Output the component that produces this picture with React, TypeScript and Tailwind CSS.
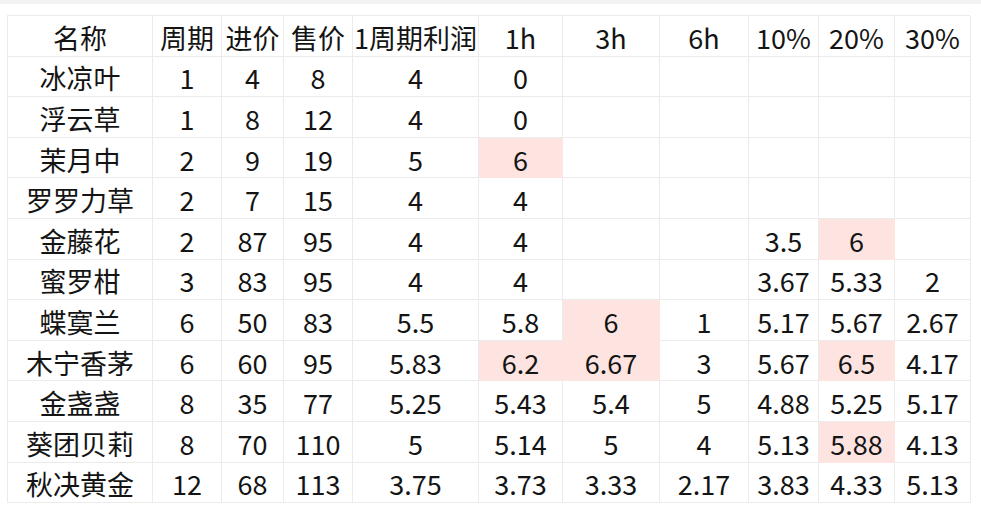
const headers = ["名称", "周期", "进价", "售价", "1周期利润", "1h", "3h", "6h", "10%", "20%", "30%"]

// "*" prefix marks a highlighted cell
const rows: string[][] = [
  ["冰凉叶", "1", "4", "8", "4", "0", "", "", "", "", ""],
  ["浮云草", "1", "8", "12", "4", "0", "", "", "", "", ""],
  ["茉月中", "2", "9", "19", "5", "*6", "", "", "", "", ""],
  ["罗罗力草", "2", "7", "15", "4", "4", "", "", "", "", ""],
  ["金藤花", "2", "87", "95", "4", "4", "", "", "3.5", "*6", ""],
  ["蜜罗柑", "3", "83", "95", "4", "4", "", "", "3.67", "5.33", "2"],
  ["蝶寞兰", "6", "50", "83", "5.5", "5.8", "*6", "1", "5.17", "5.67", "2.67"],
  ["木宁香茅", "6", "60", "95", "5.83", "*6.2", "*6.67", "3", "5.67", "*6.5", "4.17"],
  ["金盏盏", "8", "35", "77", "5.25", "5.43", "5.4", "5", "4.88", "5.25", "5.17"],
  ["葵团贝莉", "8", "70", "110", "5", "5.14", "5", "4", "5.13", "*5.88", "4.13"],
  ["秋决黄金", "12", "68", "113", "3.75", "3.73", "3.33", "2.17", "3.83", "4.33", "5.13"],
]

function Cell({ value }: { value: string }) {
  const hot = value.startsWith("*")
  const text = hot ? value.slice(1) : value
  return (
    <div
      className={
        "flex h-[40.6px] items-center justify-center whitespace-nowrap border-b border-r pt-[3px] " +
        (hot ? "border-[#fde4e1] bg-[#fde4e1]" : "border-[#ebebeb] bg-white")
      }
    >
      {text}
    </div>
  )
}

export default function App() {
  return (
    <div className="h-[508px] w-[981px] overflow-hidden bg-white font-['Noto_Sans_CJK_SC',sans-serif] text-[27px] leading-none text-[#141414]">
      <div className="h-[4px] bg-[#f2f2f2]" />
      <div className="pl-[7px] pt-[11px]">
        <div className="grid w-[963px] grid-cols-[145px_69px_62px_69px_126px_84px_97px_89px_70px_76px_76px] border-l border-t border-[#ebebeb]">
          {headers.map((h) => (
            <Cell key={h} value={h} />
          ))}
          {rows.map((r) => r.map((v, i) => <Cell key={r[0] + i} value={v} />))}
        </div>
      </div>
    </div>
  )
}
